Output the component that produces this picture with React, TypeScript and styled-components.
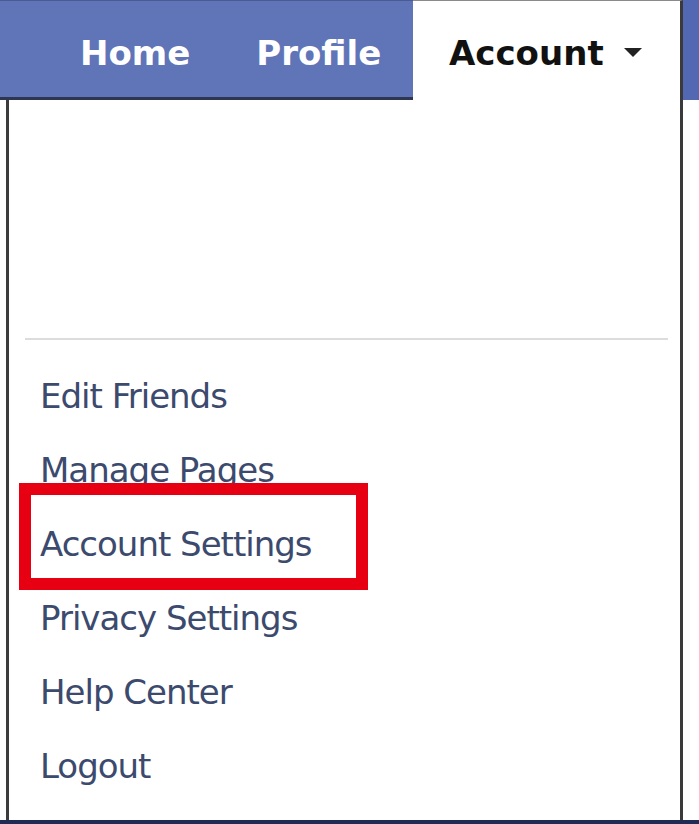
import React from "react";
import styled, { createGlobalStyle } from "styled-components";

const Global = createGlobalStyle`
  html, body { margin: 0; padding: 0; background: #ffffff; }
  body { font-family: "DejaVu Sans", Verdana, sans-serif; }
`;

const Page = styled.div`
  width: 699px;
  height: 824px;
  display: flex;
  flex-direction: column;
  background: #ffffff;
  overflow: hidden;
`;

const Header = styled.div`
  display: flex;
  height: 100px;
  flex: none;
`;

const NavBar = styled.nav`
  box-sizing: border-box;
  width: 413px;
  height: 100px;
  background: #6074b8;
  border-top: 1px solid #4b5a90;
  border-bottom: 3px solid #2e3652;
  display: flex;
  align-items: flex-start;
  gap: 66px;
  padding: 35px 0 0 80px;
`;

const NavLink = styled.span<{ $active?: boolean }>`
  font-family: "DejaVu Sans", Verdana, sans-serif;
  font-weight: bold;
  font-size: 34px;
  line-height: 34px;
  color: ${(p) => (p.$active ? "#111111" : "#ffffff")};
  white-space: nowrap;
`;

const AccountTab = styled.div`
  box-sizing: border-box;
  width: 270px;
  height: 100px;
  background: #ffffff;
  border-top: 1px solid #8a8a8a;
  border-right: 3px solid #3a3a3a;
  display: flex;
  align-items: flex-start;
  gap: 20px;
  padding: 35px 0 0 36px;
`;

const Caret = styled.span`
  width: 0;
  height: 0;
  margin-top: 12px;
  border-left: 9px solid transparent;
  border-right: 9px solid transparent;
  border-top: 9px solid #222222;
`;

const RightStrip = styled.div`
  flex: 1;
  height: 100px;
  background: #5268b3;
`;

const Body = styled.div`
  display: flex;
  flex: 1;
  min-height: 0;
`;

const Panel = styled.div`
  position: relative;
  box-sizing: border-box;
  margin-left: 6px;
  width: 677px;
  border-left: 3px solid #3c3c3c;
  border-right: 3px solid #3a3a3a;
  background: #ffffff;
  display: flex;
  flex-direction: column;
`;

const Spacer = styled.div`
  height: 238px;
  flex: none;
`;

const Divider = styled.div`
  height: 2px;
  margin: 0 12px 0 16px;
  background: #dcdcdc;
`;

const Menu = styled.ul`
  list-style: none;
  margin: 19px 0 0 0;
  padding: 0 0 0 31px;
`;

const MenuItem = styled.li`
  font-family: "DejaVu Sans", Verdana, sans-serif;
  font-size: 34px;
  line-height: 74px;
  letter-spacing: -1px;
  color: #3b4a6d;
  white-space: nowrap;
`;

const Highlight = styled.div`
  position: absolute;
  left: 10px;
  top: 383px;
  width: 349px;
  height: 107px;
  box-sizing: border-box;
  border: 12px solid #e60012;
  pointer-events: none;
`;

const Footer = styled.div`
  height: 4px;
  flex: none;
  background: #1f2a55;
`;

const items = [
  "Edit Friends",
  "Manage Pages",
  "Account Settings",
  "Privacy Settings",
  "Help Center",
  "Logout",
];

export default function App() {
  return (
    <>
      <Global />
      <Page>
        <Header>
          <NavBar>
            <NavLink>Home</NavLink>
            <NavLink>Profile</NavLink>
          </NavBar>
          <AccountTab>
            <NavLink $active>Account</NavLink>
            <Caret />
          </AccountTab>
          <RightStrip />
        </Header>
        <Body>
          <Panel>
            <Spacer />
            <Divider />
            <Menu>
              {items.map((t) => (
                <MenuItem key={t}>{t}</MenuItem>
              ))}
            </Menu>
            <Highlight />
          </Panel>
        </Body>
        <Footer />
      </Page>
    </>
  );
}
